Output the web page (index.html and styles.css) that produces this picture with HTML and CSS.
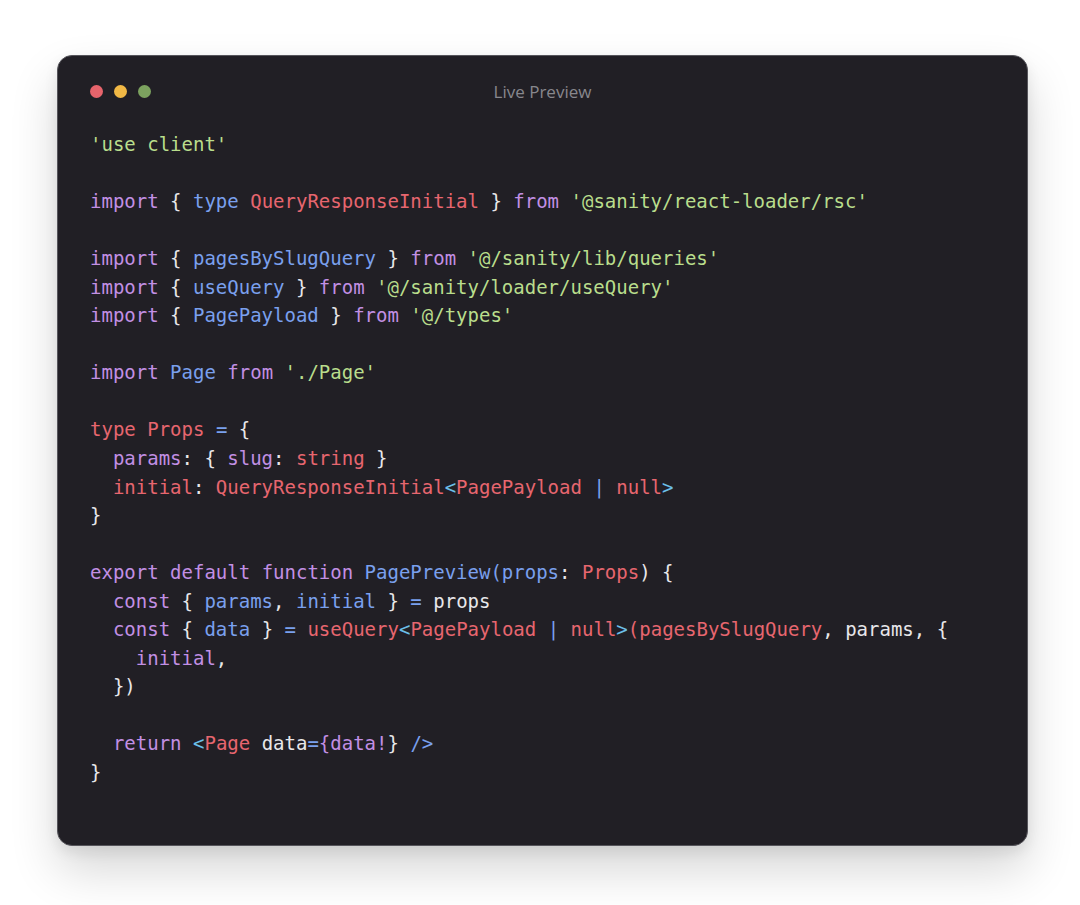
FILE: index.html
```html
<!DOCTYPE html>
<html lang="en">
<head>
<meta charset="utf-8">
<title>Live Preview</title>
<link rel="stylesheet" href="styles.css">
</head>
<body>
<div class="window">
  <div class="titlebar">
    <div class="dots">
      <span class="dot red"></span>
      <span class="dot yellow"></span>
      <span class="dot green"></span>
    </div>
    <div class="title">Live Preview</div>
    <div></div>
  </div>
<pre class="code"><span class="s">'use client'</span>

<span class="k">import</span> { <span class="b">type</span> <span class="r">QueryResponseInitial</span> } <span class="k">from</span> <span class="s">'@sanity/react-loader/rsc'</span>

<span class="k">import</span> { <span class="b">pagesBySlugQuery</span> } <span class="k">from</span> <span class="s">'@/sanity/lib/queries'</span>
<span class="k">import</span> { <span class="b">useQuery</span> } <span class="k">from</span> <span class="s">'@/sanity/loader/useQuery'</span>
<span class="k">import</span> { <span class="b">PagePayload</span> } <span class="k">from</span> <span class="s">'@/types'</span>

<span class="k">import</span> <span class="b">Page</span> <span class="k">from</span> <span class="s">'./Page'</span>

<span class="r">type</span> <span class="r">Props</span> <span class="b">=</span> {
  <span class="k">params</span>: { <span class="k">slug</span>: <span class="r">string</span> }
  <span class="r">initial</span>: <span class="r">QueryResponseInitial</span><span class="c">&lt;</span><span class="r">PagePayload</span> <span class="b">|</span> <span class="r">null</span><span class="c">&gt;</span>
}

<span class="k">export</span> <span class="k">default</span> <span class="k">function</span> <span class="b">PagePreview(props</span>: <span class="r">Props</span>) {
  <span class="k">const</span> { <span class="b">params</span>, <span class="b">initial</span> } <span class="b">=</span> props
  <span class="k">const</span> { <span class="b">data</span> } <span class="b">=</span> <span class="r">useQuery</span><span class="c">&lt;</span><span class="r">PagePayload</span> <span class="b">|</span> <span class="r">null</span><span class="c">&gt;</span><span class="r">(pagesBySlugQuery</span>, params, {
    <span class="k">initial</span>,
  })

  <span class="k">return</span> <span class="c">&lt;</span><span class="r">Page</span> data<span class="b">=</span><span class="k">{data!</span>} <span class="b">/&gt;</span>
}
</pre>
</div>
</body>
</html>
```

FILE: styles.css
```css
html, body {
  margin: 0;
  padding: 0;
  background: #ffffff;
}

body {
  padding: 55px 52px 59px 57px;
}

.window {
  width: 971px;
  height: 791px;
  box-sizing: border-box;
  background: #211f25;
  border: 1.5px solid #56555b;
  border-radius: 15px;
  box-shadow: 0 24px 48px rgba(0, 0, 0, 0.16), 0 6px 14px rgba(0, 0, 0, 0.08);
  padding: 24px 32px 0 32px;
}

.titlebar {
  display: grid;
  grid-template-columns: 1fr auto 1fr;
  align-items: center;
  height: 14px;
}

.dots {
  display: flex;
  gap: 11px;
}

.dot {
  width: 13px;
  height: 13px;
  border-radius: 50%;
}

.dot.red { background: #e7646c; }
.dot.yellow { background: #f1b845; }
.dot.green { background: #7ca25f; }

.title {
  font-family: "Open Sans", "DejaVu Sans", sans-serif;
  font-size: 17px;
  color: #88878d;
}

.code {
  margin: 36px 0 0 0;
  font-family: "DejaVu Sans Mono", "Liberation Mono", monospace;
  font-size: 19px;
  line-height: 28.55px;
  color: #e8e7ea;
  white-space: pre;
}

.s { color: #b9dd8c; }
.k { color: #c28fe4; }
.b { color: #7aa0ee; }
.r { color: #e7666f; }
.c { color: #6cbfe8; }
```
